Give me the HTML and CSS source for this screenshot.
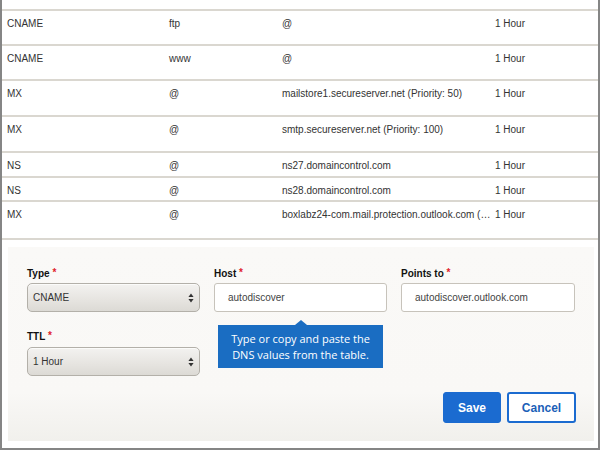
FILE: index.html
```html
<!DOCTYPE html>
<html>
<head>
<meta charset="utf-8">
<link rel="stylesheet" href="styles.css">
</head>
<body>
<div class="frame">
  <div class="records">
    <div class="row r35"><span>CNAME</span><span>ftp</span><span>@</span><span>1 Hour</span></div>
    <div class="row r35"><span>CNAME</span><span>www</span><span>@</span><span>1 Hour</span></div>
    <div class="row r36"><span>MX</span><span>@</span><span>mailstore1.secureserver.net (Priority: 50)</span><span>1 Hour</span></div>
    <div class="row r36"><span>MX</span><span>@</span><span>smtp.secureserver.net (Priority: 100)</span><span>1 Hour</span></div>
    <div class="row r25"><span>NS</span><span>@</span><span>ns27.domaincontrol.com</span><span>1 Hour</span></div>
    <div class="row r24"><span>NS</span><span>@</span><span>ns28.domaincontrol.com</span><span>1 Hour</span></div>
    <div class="row last"><span>MX</span><span>@</span><span>boxlabz24-com.mail.protection.outlook.com (…</span><span>1 Hour</span></div>
  </div>

  <div class="panel">
    <div class="fields">
      <div class="field">
        <label class="label">Type <span class="req">*</span></label>
        <div class="select"><span>CNAME</span>
          <svg class="arrows" width="6" height="10" viewBox="0 0 6 10"><path d="M3 0.5 L5.6 4 L0.4 4 Z M3 9.5 L5.6 6 L0.4 6 Z" fill="#333"/></svg>
        </div>
      </div>
      <div class="field host">
        <label class="label">Host <span class="req">*</span></label>
        <div class="input">autodiscover</div>
        <div class="tooltip">Type or copy and paste the<br>DNS values from the table.</div>
      </div>
      <div class="field">
        <label class="label">Points to <span class="req">*</span></label>
        <div class="input">autodiscover.outlook.com</div>
      </div>
      <div class="field ttl">
        <label class="label">TTL <span class="req">*</span></label>
        <div class="select"><span>1 Hour</span>
          <svg class="arrows" width="6" height="10" viewBox="0 0 6 10"><path d="M3 0.5 L5.6 4 L0.4 4 Z M3 9.5 L5.6 6 L0.4 6 Z" fill="#333"/></svg>
        </div>
      </div>
    </div>
    <div class="actions">
      <button class="btn save">Save</button>
      <button class="btn cancel">Cancel</button>
    </div>
  </div>
</div>
</body>
</html>
```

FILE: styles.css
```css
* { box-sizing: border-box; }
html, body { margin: 0; padding: 0; background: #fff; }
body { font-family: "Liberation Sans", Arial, sans-serif; }

.frame {
  width: 600px;
  height: 450px;
  border-left: 2px solid #858585;
  border-right: 2px solid #858585;
  border-bottom: 2px solid #858585;
  background: #fff;
  overflow: hidden;
}

.records { padding-top: 9px; }

.row {
  display: grid;
  grid-template-columns: 162px 113px 213px 1fr;
  border-top: 2px solid #dad7d0;
  font-size: 10px;
  line-height: 12px;
  color: #333;
}
.row span { padding: 7px 0 0 5px; white-space: nowrap; }
.r35 { height: 35px; }
.r36 { height: 36px; }
.r25 { height: 25px; }
.r24 { height: 24px; }
.row.last { height: 40px; border-bottom: 2px solid #dad7d0; }

.panel {
  margin: 7px 4px 0 6px;
  height: 194px;
  padding: 21px 17px 0 19px;
  background: linear-gradient(to bottom, #faf9f7 0%, #f9f8f6 75%, #f1f0ec 100%);
}

.fields {
  display: grid;
  grid-template-columns: 173px 173px 174px;
  column-gap: 14px;
  row-gap: 19px;
}
.field { position: relative; display: flex; flex-direction: column; }

.label {
  font-family: "Liberation Sans", Arial, sans-serif;
  font-weight: 700;
  font-size: 10px;
  line-height: 12px;
  color: #111;
  height: 12px;
  margin-bottom: 3px;
}
.ttl .label { margin-bottom: 4px; }
.req { color: #e0202a; font-size: 10px; position: relative; top: -1px; }

.select {
  height: 29px;
  border: 1px solid #b3b0a9;
  border-radius: 5px;
  background: linear-gradient(to bottom, #f3f2f0 0%, #e6e4e0 60%, #dcdad5 100%);
  box-shadow: inset 0 1px 0 #fbfbfa;
  display: flex;
  align-items: center;
  justify-content: space-between;
  padding: 0 5px 0 5px;
  font-size: 10px;
  color: #333;
}
.arrows { display: block; }

.input {
  height: 29px;
  border: 1px solid #c7c3bb;
  border-radius: 3px;
  background: #fff;
  display: flex;
  align-items: center;
  padding-left: 13px;
  font-size: 10px;
  color: #444;
}

.tooltip {
  position: absolute;
  left: 4px;
  top: 57px;
  width: 165px;
  height: 43px;
  background: #1a6dc2;
  color: #fff;
  font-family: "Open Sans", "Noto Sans", sans-serif;
  font-size: 11px;
  line-height: 16px;
  text-align: center;
  padding-top: 6px;
  z-index: 2;
}
.tooltip::before {
  content: "";
  position: absolute;
  left: 77px;
  top: -5px;
  border-left: 6px solid transparent;
  border-right: 6px solid transparent;
  border-bottom: 5px solid #1a6dc2;
}

.actions {
  display: flex;
  justify-content: flex-end;
  gap: 6px;
  margin-top: 16px;
  padding-right: 1px;
}
.btn {
  height: 31px;
  border-radius: 3px;
  font-family: "Liberation Sans", Arial, sans-serif;
  font-weight: 700;
  font-size: 12px;
  padding: 0;
  cursor: pointer;
}
.save { width: 58px; background: #1b6bd0; border: 1px solid #1b6bd0; color: #fff; }
.cancel { width: 69px; background: #fff; border: 2px solid #1b6bd0; color: #1b5fb8; }
```
